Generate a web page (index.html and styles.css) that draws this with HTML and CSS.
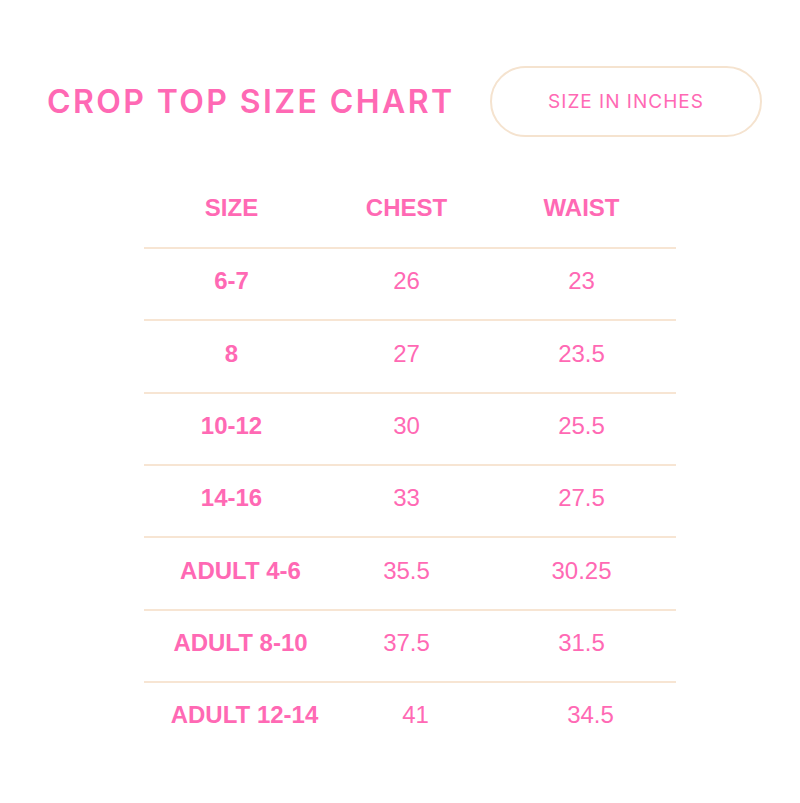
FILE: index.html
```html
<!DOCTYPE html>
<html>
<head>
<meta charset="utf-8">
<link rel="stylesheet" href="styles.css">
</head>
<body>
<div class="page">
  <header class="top">
    <h1 class="title">CROP TOP SIZE CHART</h1>
    <div class="pill">SIZE IN INCHES</div>
  </header>
  <div class="chart">
    <div class="row head">
      <div class="cell">SIZE</div>
      <div class="cell">CHEST</div>
      <div class="cell">WAIST</div>
    </div>
    <div class="row">
      <div class="cell size">6-7</div>
      <div class="cell">26</div>
      <div class="cell">23</div>
    </div>
    <div class="row">
      <div class="cell size">8</div>
      <div class="cell">27</div>
      <div class="cell">23.5</div>
    </div>
    <div class="row">
      <div class="cell size">10-12</div>
      <div class="cell">30</div>
      <div class="cell">25.5</div>
    </div>
    <div class="row">
      <div class="cell size">14-16</div>
      <div class="cell">33</div>
      <div class="cell">27.5</div>
    </div>
    <div class="row">
      <div class="cell size nudge">ADULT 4-6</div>
      <div class="cell">35.5</div>
      <div class="cell">30.25</div>
    </div>
    <div class="row">
      <div class="cell size nudge">ADULT 8-10</div>
      <div class="cell">37.5</div>
      <div class="cell">31.5</div>
    </div>
    <div class="row">
      <div class="cell size nudge-more">ADULT 12-14</div>
      <div class="cell nudge">41</div>
      <div class="cell nudge">34.5</div>
    </div>
  </div>
</div>
</body>
</html>
```
FILE: styles.css
```css
* { box-sizing: border-box; }
html, body { margin: 0; padding: 0; background: #ffffff; }
.page {
  width: 800px;
  height: 803px;
  color: #ff69b4;
  font-family: "Liberation Sans", Arial, sans-serif;
}
.top {
  display: flex;
  align-items: center;
  justify-content: space-between;
  padding: 66px 38px 0 47px;
}
.title {
  margin: 0;
  font-family: Inter, "Liberation Sans", sans-serif;
  font-weight: 600;
  font-size: 32px;
  letter-spacing: 2.4px;
  line-height: 1;
}
.pill {
  width: 272px;
  height: 71px;
  border: 2px solid #f5e3cf;
  border-radius: 36px;
  display: flex;
  align-items: center;
  justify-content: center;
  font-family: Inter, "Liberation Sans", sans-serif;
  font-size: 19px;
  letter-spacing: 1px;
}
.chart {
  margin: 31px 0 0 144px;
  width: 532px;
}
.row {
  display: grid;
  grid-template-columns: 175px 175px 175px;
  height: 72.33px;
  border-top: 2px solid #f7e5d3;
  padding-bottom: 6px;
  align-items: center;
  font-size: 24px;
}
.row.head {
  border-top: none;
  height: 79px;
  padding-bottom: 0;
  font-weight: bold;
}
.cell {
  text-align: center;
  line-height: 1.15;
}
.size { font-weight: bold; }
.nudge { padding-left: 18px; }
.nudge-more { padding-left: 26px; }
```
